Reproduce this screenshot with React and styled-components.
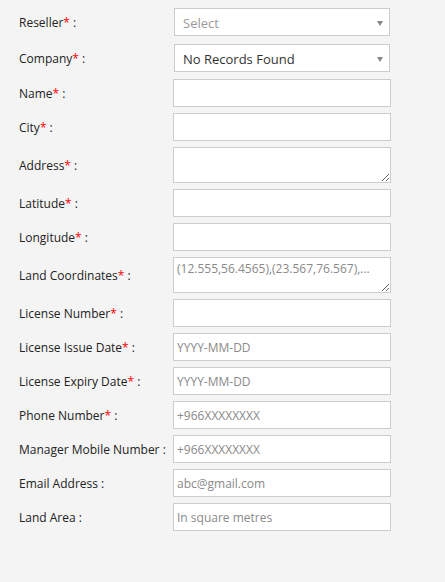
import React from "react";
import styled, { createGlobalStyle } from "styled-components";

const GlobalStyle = createGlobalStyle`
  html, body {
    margin: 0;
    padding: 0;
    background: #f4f4f4;
  }
  body {
    font-family: "Open Sans", "Noto Sans", sans-serif;
  }
`;

const Form = styled.form`
  display: flex;
  flex-direction: column;
  gap: 6px;
  padding: 7px 0 0 19px;
  min-height: 100vh;
  box-sizing: border-box;
  background: #f4f4f4;
`;

const Row = styled.div`
  display: flex;
  align-items: center;
`;

const Label = styled.label`
  width: 154px;
  flex-shrink: 0;
  font-size: 12px;
  color: #222;
`;

const Star = styled.span`
  color: #f00;
`;

const Input = styled.input`
  box-sizing: border-box;
  width: 218px;
  height: 28px;
  margin: 0;
  padding: 0 3px;
  border: 1px solid #ccc;
  background: #fff;
  font-family: "Open Sans", "Noto Sans", sans-serif;
  font-size: 12px;
  color: #333;
  outline: none;
  &::placeholder {
    color: #8a8a8a;
  }
`;

const TextArea = styled.textarea`
  box-sizing: border-box;
  width: 218px;
  height: 36px;
  margin: 0;
  padding: 2px 3px;
  border: 1px solid #ccc;
  background: #fff;
  font-family: "Open Sans", "Noto Sans", sans-serif;
  font-size: 12px;
  color: #333;
  outline: none;
  display: block;
  &::placeholder {
    color: #8a8a8a;
  }
`;

const SelectWrap = styled.div`
  position: relative;
  width: 216px;
  height: 28px;
  margin: 1px;
  &::after {
    content: "";
    position: absolute;
    right: 7px;
    top: 13px;
    border-left: 3.5px solid transparent;
    border-right: 3.5px solid transparent;
    border-top: 5px solid #888;
    pointer-events: none;
  }
`;

const Select = styled.select`
  appearance: none;
  box-sizing: border-box;
  width: 100%;
  height: 100%;
  margin: 0;
  padding: 2px 20px 0 8px;
  border: 1px solid #ccc;
  border-radius: 0;
  background: #fff;
  font-family: "Open Sans", "Noto Sans", sans-serif;
  font-size: 13px;
  color: ${(props) => (props.$muted ? "#999" : "#333")};
  outline: none;
`;

const fields = [
  { label: "Name", req: true },
  { label: "City", req: true },
  { label: "Address", req: true, area: true },
  { label: "Latitude", req: true },
  { label: "Longitude", req: true },
  {
    label: "Land Coordinates",
    req: true,
    area: true,
    ph: "(12.555,56.4565),(23.567,76.567),...",
  },
  { label: "License Number", req: true },
  { label: "License Issue Date", req: true, ph: "YYYY-MM-DD" },
  { label: "License Expiry Date", req: true, ph: "YYYY-MM-DD" },
  { label: "Phone Number", req: true, ph: "+966XXXXXXXX" },
  { label: "Manager Mobile Number", ph: "+966XXXXXXXX" },
  { label: "Email Address", ph: "abc@gmail.com" },
  { label: "Land Area", ph: "In square metres" },
];

const FieldLabel = ({ text, req }) => (
  <Label>
    {text}
    {req && <Star>*</Star>} :
  </Label>
);

export default function App() {
  return (
    <>
      <GlobalStyle />
      <Form>
        <Row>
          <FieldLabel text="Reseller" req />
          <SelectWrap>
            <Select $muted defaultValue="">
              <option value="">Select</option>
            </Select>
          </SelectWrap>
        </Row>
        <Row>
          <FieldLabel text="Company" req />
          <SelectWrap>
            <Select defaultValue="">
              <option value="">No Records Found</option>
            </Select>
          </SelectWrap>
        </Row>
        {fields.map((f) => (
          <Row key={f.label}>
            <FieldLabel text={f.label} req={f.req} />
            {f.area ? (
              <TextArea placeholder={f.ph} />
            ) : (
              <Input type="text" placeholder={f.ph} />
            )}
          </Row>
        ))}
      </Form>
    </>
  );
}
